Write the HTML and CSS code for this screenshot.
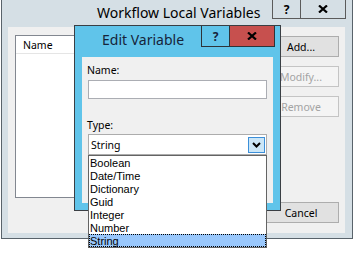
FILE: index.html
```html
<!DOCTYPE html>
<html lang="en">
<head>
    <meta charset="UTF-8">
    <title>Workflow Local Variables</title>
    <link rel="stylesheet" href="styles.css">
</head>
<body>
    <div class="window">
        <div class="titlebar">
            <span class="title">Workflow Local Variables</span>
            <div class="caption">
                <span class="cap-btn help">?</span>
                <span class="cap-btn close">
                    <svg width="10" height="8" viewBox="0 0 10 8"><path d="M1 0.5 L9 7.5 M9 0.5 L1 7.5" stroke="#000" stroke-width="2.2"/></svg>
                </span>
            </div>
        </div>
        <div class="client">
            <div class="listview">
                <div class="lv-header"><span>Name</span></div>
            </div>
            <div class="side-buttons">
                <button class="btn">Add...</button>
                <button class="btn" disabled>Modify...</button>
                <button class="btn" disabled>Remove</button>
                <button class="btn cancel">Cancel</button>
            </div>
        </div>
    </div>

    <!-- Edit Variable dialog sits over the main window -->
    <div class="dialog">
        <div class="titlebar dlg-titlebar">
            <span class="title">Edit Variable</span>
            <div class="caption">
                <span class="cap-btn help">?</span>
                <span class="cap-btn close red">
                    <svg width="10" height="8" viewBox="0 0 10 8"><path d="M1 0.5 L9 7.5 M9 0.5 L1 7.5" stroke="#000" stroke-width="2.2"/></svg>
                </span>
            </div>
        </div>
        <div class="dlg-client">
            <label class="field-label">Name:</label>
            <div class="textbox"></div>
            <label class="field-label type-label">Type:</label>
            <div class="combo">
                <span class="combo-text">String</span>
                <span class="combo-arrow">
                    <svg width="9" height="6" viewBox="0 0 9 6"><path d="M1 1 L4.5 4.5 L8 1" fill="none" stroke="#000" stroke-width="2"/></svg>
                </span>
                <ul class="droplist">
                    <li>Boolean</li>
                    <li>Date/Time</li>
                    <li>Dictionary</li>
                    <li>Guid</li>
                    <li>Integer</li>
                    <li>Number</li>
                    <li class="selected">String</li>
                </ul>
            </div>
        </div>
    </div>
</body>
</html>
```

FILE: styles.css
```css
* {
    box-sizing: border-box;
}
body {
    margin: 0;
    background: #fff;
    font-family: "Noto Sans", "Open Sans", sans-serif;
    font-size: 10.5px;
    color: #000;
}
.window {
    margin-left: 1px;
    width: 352px;
    height: 239px;
    background: #d5dfe5;
    border: 1px solid #59636b;
    border-top: 0;
    display: flex;
    flex-direction: column;
}
.titlebar {
    display: flex;
    height: 27px;
    flex-shrink: 0;
}
.title {
    flex: 1;
    font-size: 14px;
    line-height: 18px;
    padding: 4px 0 0 95px;
    white-space: nowrap;
}
.caption {
    display: flex;
    align-self: flex-start;
    margin-right: 6px;
}
.cap-btn {
    display: flex;
    align-items: center;
    justify-content: center;
    height: 19px;
    border: 1px solid #5b5b5b;
    border-top: 0;
    font-weight: bold;
    font-size: 12px;
}
.help {
    width: 28px;
    border-right: 0;
}
.close {
    width: 46px;
}
.client {
    height: 206px;
    margin: 0 7px 0 6px;
    padding: 8px 6px 0 7px;
    background: #f0f0f0;
    display: flex;
    gap: 8px;
}
.listview {
    flex: 1;
    align-self: flex-start;
    height: 163px;
    background: #fff;
    border: 1px solid #828790;
}
.lv-header {
    height: 18px;
    padding: 2px 0 0 7px;
    line-height: 15px;
    border-bottom: 1px solid #e5e5e5;
}
.side-buttons {
    width: 76px;
    display: flex;
    flex-direction: column;
    gap: 9px;
    padding: 1px 0 10px;
}
.btn {
    height: 21px;
    padding: 0;
    font-family: inherit;
    font-size: 10.5px;
    color: #000;
    background: #e1e1e1;
    border: 1px solid #adadad;
}
.btn:disabled {
    background: #f4f4f4;
    border-color: #c4c4c4;
    color: #a3a3a3;
}
.cancel {
    margin-top: auto;
}

/* dialog */
.dialog {
    position: absolute;
    left: 74px;
    top: 25px;
    width: 207px;
    height: 186px;
    background: #60c4ea;
    border: 1px solid #3a3f44;
    display: flex;
    flex-direction: column;
}
.dlg-titlebar {
    height: 31px;
}
.dlg-titlebar .title {
    padding: 5px 0 0 27px;
    color: #16243a;
}
.dlg-titlebar .caption {
    margin-right: 5px;
}
.dlg-titlebar .cap-btn {
    height: 21px;
    border-color: #2e3338;
    color: #16243a;
}
.red {
    background: #c7504e;
}
.dlg-client {
    flex: 1;
    margin: 0 7px 7px;
    padding: 6px 6px 0;
    background: #f0f0f0;
}
.field-label {
    display: block;
    margin-left: -1px;
    line-height: 14px;
}
.type-label {
    margin-top: 19px;
}
.textbox {
    margin-top: 3px;
    height: 19px;
    background: #fff;
    border: 1px solid #abadb3;
}
.combo {
    position: relative;
    margin-top: 2px;
    height: 21px;
    padding: 0 1px 0 2px;
    background: #fff;
    border: 1px solid #acacac;
    display: flex;
    align-items: center;
}
.combo-text {
    flex: 1;
}
.combo-arrow {
    width: 17px;
    height: 16px;
    background: #cbe6f7;
    border: 1px solid #3c8fd9;
    display: flex;
    align-items: center;
    justify-content: center;
}
.droplist {
    position: absolute;
    top: 20px;
    left: -1px;
    width: 179px;
    margin: 0;
    padding: 0;
    list-style: none;
    background: #fff;
    border: 1px solid #646464;
    font-family: "Liberation Sans", Arial, sans-serif;
    font-size: 11px;
}
.droplist li {
    height: 13px;
    padding: 1px 0 0 1px;
    line-height: 12px;
}
.droplist .selected {
    background: #99c7fb;
    outline: 1px dotted #000;
    outline-offset: -1px;
}
```
